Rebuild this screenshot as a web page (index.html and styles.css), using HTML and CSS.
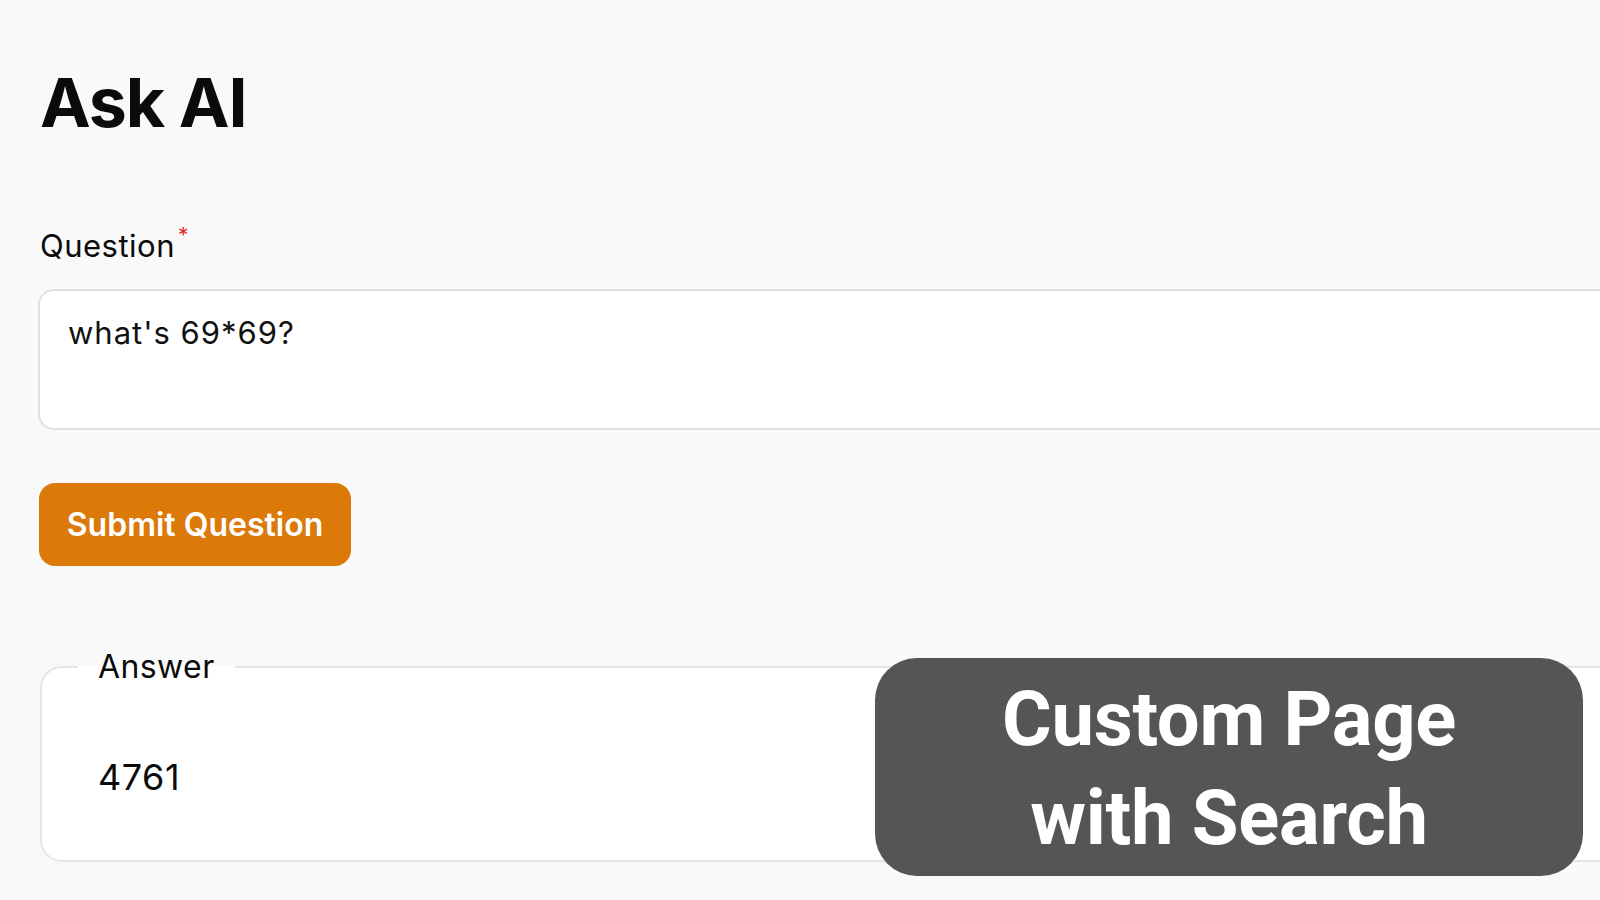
FILE: index.html
```html
<!DOCTYPE html>
<html lang="en">

    <head>
        <meta charset="UTF-8">
        <meta name="viewport" content="width=device-width, initial-scale=1.0">
        <title>Ask AI</title>
        <link rel="stylesheet" href="styles.css">
    </head>

    <body>

        <main class="page">
            <h1 class="title">Ask AI</h1>

            <form class="ask-form">
                <label class="field-label" for="question">Question<span class="required">*</span></label>
                <textarea id="question" class="question-input">what's 69*69?</textarea>
                <button type="button" class="submit-btn">Submit Question</button>
            </form>

            <fieldset class="answer">
                <legend class="answer-legend">Answer</legend>
                <p class="answer-text">4761</p>
            </fieldset>
        </main>

        <!-- caption banner over the screenshot -->
        <div class="banner">Custom Page<br>with Search</div>

    </body>

</html>
```

FILE: styles.css
```css
html,
body {
    margin: 0;
    padding: 0;
    overflow: hidden;
}

body {
    font-family: Inter, "Liberation Sans", sans-serif;
    background-color: #f9f9f9;
    color: #0b0b0c;
    width: 1600px;
    height: 900px;
    position: relative;
}

.page {
    width: 1720px;
    padding: 61px 0 0 38px;
    box-sizing: border-box;
}

.title {
    margin: 0;
    font-size: 68px;
    font-weight: 700;
    line-height: 82px;
    letter-spacing: -1.2px;
    padding-left: 2px;
}

.ask-form {
    display: flex;
    flex-direction: column;
    align-items: flex-start;
    margin-top: 85px;
}

.field-label {
    font-size: 31px;
    line-height: 36px;
    padding-left: 2px;
    letter-spacing: 0.5px;
}

.required {
    color: #e0292b;
    font-size: 21px;
    line-height: 0;
    vertical-align: 14px;
    margin-left: 3px;
}

.question-input {
    margin-top: 25px;
    width: 100%;
    height: 141px;
    box-sizing: border-box;
    padding: 22px 28px;
    border: 2px solid #e1e1e1;
    border-radius: 16px;
    background-color: #fff;
    font-family: Inter, "Liberation Sans", sans-serif;
    font-size: 31px;
    line-height: 40px;
    letter-spacing: 1px;
    color: #111;
    resize: none;
}

.submit-btn {
    margin-top: 53px;
    margin-left: 1px;
    width: 312px;
    height: 83px;
    padding: 0;
    border: none;
    border-radius: 16px;
    background-color: #db7909;
    color: #fff;
    font-family: Inter, "Liberation Sans", sans-serif;
    font-size: 32px;
    font-weight: 600;
    cursor: pointer;
}

.answer {
    margin: 85px 0 0 2px;
    width: 100%;
    height: 211px;
    box-sizing: border-box;
    padding: 0 36px;
    border: 2px solid #e5e5e5;
    border-radius: 22px;
    background-color: #fff;
}

.answer-legend {
    padding: 0 20px;
    font-size: 32px;
    line-height: 32px;
    letter-spacing: 0.4px;
}

.answer-text {
    margin: 74px 0 0;
    padding-left: 20px;
    font-size: 36px;
    line-height: 40px;
    letter-spacing: 0.5px;
}

.banner {
    position: absolute;
    left: 875px;
    top: 658px;
    width: 708px;
    height: 218px;
    box-sizing: border-box;
    padding-top: 12px;
    border-radius: 42px;
    background-color: #555555;
    color: #fff;
    font-family: Roboto, "Noto Sans", sans-serif;
    font-size: 76px;
    font-weight: 700;
    line-height: 99px;
    letter-spacing: -0.3px;
    text-align: center;
}
```
